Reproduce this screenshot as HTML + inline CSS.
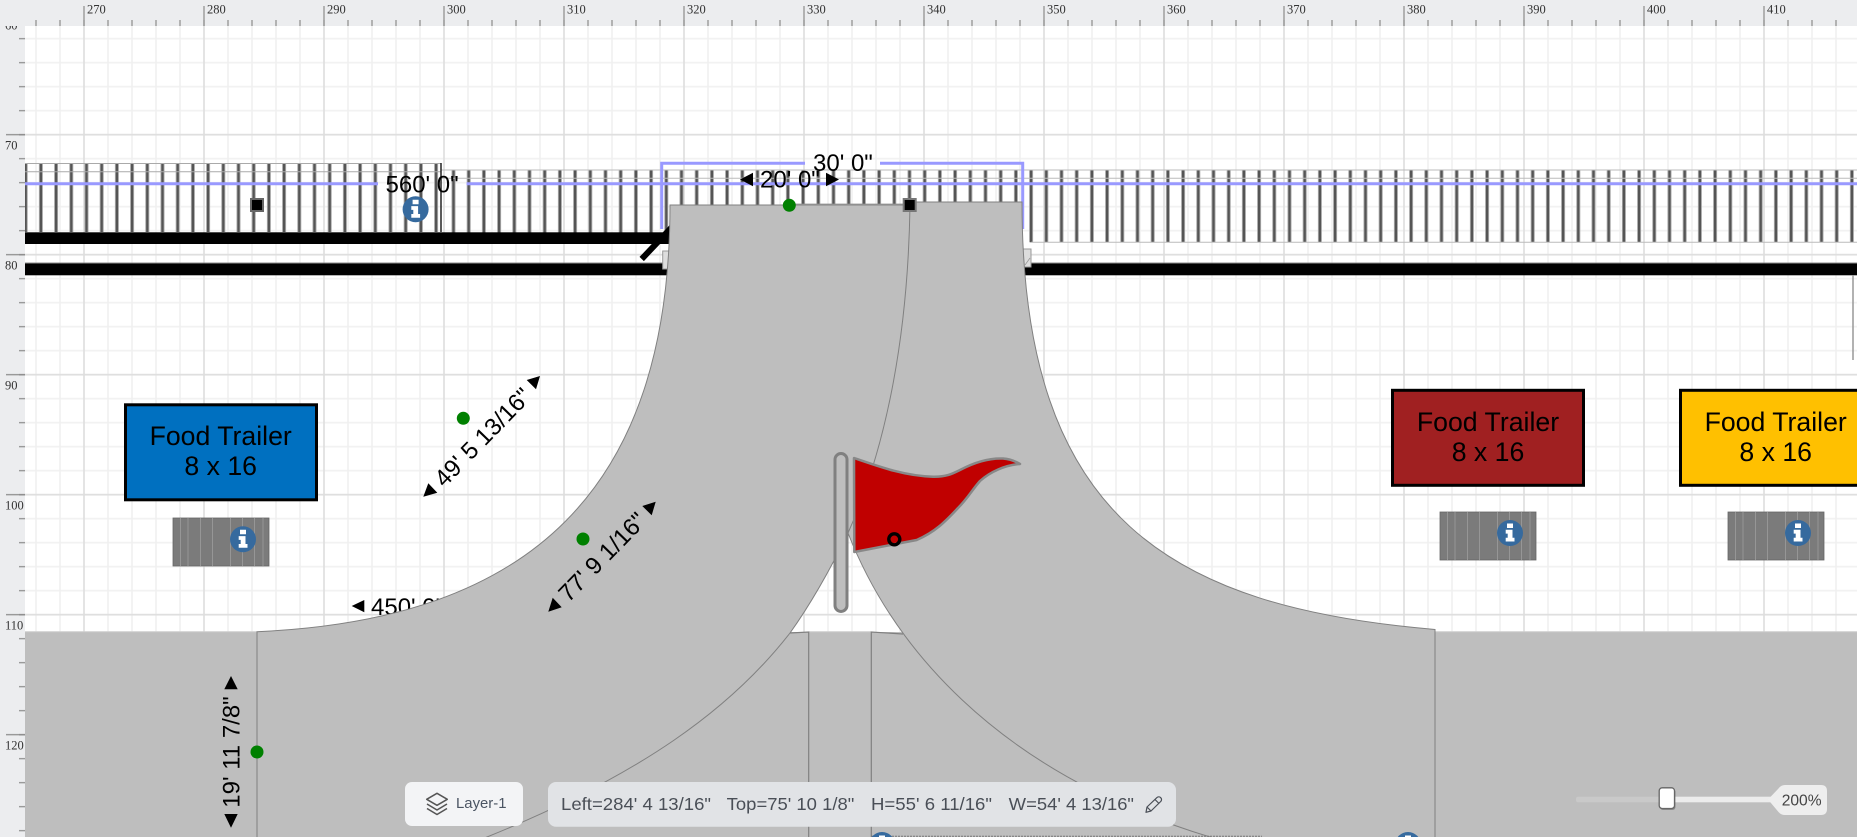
<!DOCTYPE html>
<html><head><meta charset="utf-8"><title>Site plan</title>
<style>
html,body{margin:0;padding:0;width:1857px;height:837px;overflow:hidden;background:#fff}
svg{display:block;font-family:"Liberation Sans",sans-serif}
.d{font-size:24px;fill:#000}
.f{font-size:26.67px;fill:#000;text-anchor:middle}
.r{font-family:"Liberation Serif",serif;font-size:12.5px;fill:#333}
.b{font-size:17.5px;fill:#4a4f57}
</style></head><body>
<svg width="1857" height="837" viewBox="0 0 1857 837" xmlns="http://www.w3.org/2000/svg">
<defs>
<pattern id="gm" patternUnits="userSpaceOnUse" x="0" y="2.7" width="24" height="24"><path d="M12 0V24M0 12H24" stroke="#f0f0f0" stroke-width="1.6" fill="none"/></pattern>
<pattern id="gM" patternUnits="userSpaceOnUse" x="24" y="-45.3" width="120" height="120"><path d="M60 0V120M0 60H120" stroke="#dddddd" stroke-width="1.5" fill="none"/></pattern>
<pattern id="tM" patternUnits="userSpaceOnUse" x="24" y="0" width="120" height="30"><path d="M60 6V26" stroke="#8a8a8a" stroke-width="1.2"/></pattern>
<pattern id="tm" patternUnits="userSpaceOnUse" x="0" y="0" width="24" height="30"><path d="M12 20V26" stroke="#8a8a8a" stroke-width="1.2"/></pattern>
<pattern id="lM" patternUnits="userSpaceOnUse" x="0" y="-45.3" width="30" height="120"><path d="M6 60H25" stroke="#8a8a8a" stroke-width="1.2"/></pattern>
<pattern id="lm" patternUnits="userSpaceOnUse" x="0" y="2.7" width="30" height="24"><path d="M19 12H25" stroke="#8a8a8a" stroke-width="1.2"/></pattern>
<g id="info"><circle r="13" fill="#366a9e"/><path d="M-3-9.5h6v4.5h-6zM-4.3-3.2h6.8v7.9h2v3.8h-8.8v-3.8h2v-4.1h-2z" fill="#fff"/></g>
<g id="deck"><rect width="96" height="48" fill="#7b7b7b" stroke="#666" stroke-width=".8"/><path d="M7.5 0V48M15 0V48M27.5 0V48M39.5 0V48M57.5 0V48M69.5 0V48M81.5 0V48M90 0V48" stroke="#999" stroke-width=".9"/></g>
</defs>

<rect x="25" y="26" width="1832" height="811" fill="#fff"/>
<rect x="25" y="26" width="1832" height="811" fill="url(#gm)"/>
<rect x="25" y="26" width="1832" height="811" fill="url(#gM)"/>

<!-- fence -->
<path d="M23.7 197.75H441" stroke="#a8a8a8" stroke-width="68.5" stroke-dasharray="4 11.2" fill="none"/>
<path d="M24.6 197.75H441" stroke="#555" stroke-width="68.5" stroke-dasharray="2.2 13" fill="none"/>
<path d="M25 163.5H441M25 171.7H441" stroke="#aaa" stroke-width="1"/>
<path d="M451.5 206.15H1857" stroke="#a8a8a8" stroke-width="72.3" stroke-dasharray="4 11.2" fill="none"/>
<path d="M452.4 206.15H1857" stroke="#555" stroke-width="72.3" stroke-dasharray="2.2 13" fill="none"/>
<path d="M441 170H1857M441 178.3H1857M1031 242.3H1857" stroke="#bbb" stroke-width="1"/>
<path d="M441 163V232" stroke="#222" stroke-width="1.5"/>
<path d="M25 183.7H378M466.6 183.7H1857" stroke="#9999ff" stroke-width="3"/>
<rect x="25" y="232.3" width="645" height="11.7" fill="#000"/>
<rect x="25" y="263.3" width="1832" height="12" fill="#000"/>
<path d="M25 262.9H1857" stroke="#888" stroke-width=".8"/>
<path d="M641.7 259L673 226" stroke="#000" stroke-width="6"/>
<rect x="662.7" y="251" width="9" height="18" fill="#ddd" stroke="#999"/>
<rect x="1022" y="249" width="9" height="18" fill="#ddd" stroke="#999"/>
<path d="M1025 265L1030 258" stroke="#999" stroke-width=".8"/>
<path d="M1853 275V360" stroke="#999" stroke-width="1.5"/>
<path d="M661.7 229V163.3H805M880 163.3H1022.7V229" fill="none" stroke="#9999ff" stroke-width="3"/>

<text class="d" x="371" y="615">450' 0"</text>
<path d="M351.7 606L364.3 600V612.3Z" fill="#000"/>

<!-- roads -->
<path d="M25 632H1857V845H25Z" fill="#bebebe"/>
<path d="M25 631.8H257M1435 631.8H1857M809 631.8H871" stroke="#ccc" stroke-width="1"/>
<path d="M909 202H1022C1022 520 1172 607 1435 629.5V845H1225L1210 837C990 770 890 640 848 533Z" fill="#bebebe" stroke="#808080" stroke-width="1"/>
<path d="M670 205H910C908 340 885 450 848 533C830 570 810 605 790 633C730 710 640 775 487 837L467 845H257V631.7C530 620 670 490 670 205Z" fill="#bebebe" stroke="#808080" stroke-width="1"/>
<path d="M790 633L808.7 632V837M871.3 837V632L903 634" fill="none" stroke="#808080" stroke-width="1.2"/>
<path d="M871 836.3H1262" stroke="#777" stroke-width="1" stroke-dasharray="2 1"/>
<path d="M789 204.6H905" stroke="#909090" stroke-width="2"/>

<!-- handles -->
<rect x="251" y="199" width="12" height="12" fill="#000" stroke="#666" stroke-width="2"/>
<rect x="903.7" y="199" width="12" height="12" fill="#000" stroke="#777" stroke-width="2"/>

<!-- dimension text -->
<text class="d" x="385.5" y="192.5">560' 0"</text>
<text class="d" x="813" y="171">30' 0"</text>
<text class="d" x="760" y="187.3">20' 0"</text>
<path d="M740 179.5L753 172.8V186.2ZM839 179.5L826 172.8V186.2Z" fill="#000"/>

<text class="d" text-anchor="middle" transform="translate(482.5 437) rotate(-45.7)" y="8.5">49' 5 13/16"</text>
<path d="M423.3 496.7L437.3 492.7L428.3 483.3ZM540 376L526.7 380L536 389.3Z" fill="#000"/>
<text class="d" text-anchor="middle" transform="translate(602 556.7) rotate(-45.7)" y="8.5">77' 9 1/16"</text>
<path d="M548.3 611.7L561.7 607.3L552.7 597.7ZM655.7 501.7L642.3 506L651.7 515.3Z" fill="#000"/>
<text class="d" text-anchor="middle" transform="translate(239.3 752) rotate(-90)">19' 11 7/8"</text>
<path d="M231 676L237.7 689.3H224.3ZM231 827.7L237.7 814H224.3Z" fill="#000"/>

<circle cx="789.3" cy="205.3" r="6.5" fill="#008000"/>
<circle cx="463.3" cy="418.3" r="6.5" fill="#008000"/>
<circle cx="583" cy="539" r="6.5" fill="#008000"/>
<circle cx="257" cy="752" r="6.5" fill="#008000"/>

<use href="#info" transform="translate(415.6 209.3)"/>
<use href="#info" transform="translate(882 845)"/>
<use href="#info" transform="translate(1408 845)"/>

<!-- trailers -->
<rect x="125.5" y="404.8" width="191" height="95" fill="#0070c0" stroke="#000" stroke-width="3"/>
<text class="f" x="220.7" y="445">Food Trailer</text><text class="f" x="220.7" y="475">8 x 16</text>
<rect x="1392.5" y="390.3" width="191" height="95" fill="#a02021" stroke="#000" stroke-width="3"/>
<text class="f" x="1488" y="431">Food Trailer</text><text class="f" x="1488" y="461">8 x 16</text>
<rect x="1680.5" y="390.3" width="191" height="95" fill="#ffc000" stroke="#000" stroke-width="3"/>
<text class="f" x="1775.7" y="431">Food Trailer</text><text class="f" x="1775.7" y="461">8 x 16</text>

<use href="#deck" transform="translate(173 518)"/><use href="#info" transform="translate(243 539.3)"/>
<use href="#deck" transform="translate(1440 512)"/><use href="#info" transform="translate(1510 533)"/>
<use href="#deck" transform="translate(1728 512)"/><use href="#info" transform="translate(1798 533)"/>

<!-- flag -->
<rect x="835" y="453.5" width="12" height="158" rx="6" fill="#bebebe" stroke="#808080" stroke-width="3"/>
<path d="M854 458C880 467 905 476 933 476.7C946 477 952 474 960 470C975 462 990 458 1003 458.5C1010 459 1015 461 1020 464C1005 465 990 472 980 481C972 490 968 498 958 508C945 522 935 532 916.7 540L854.3 552Z" fill="#c00000" stroke="#888" stroke-width="2.5" stroke-linejoin="round"/>
<circle cx="894.3" cy="539.3" r="5.5" fill="none" stroke="#000" stroke-width="3.4"/>

<!-- rulers -->
<rect x="0" y="0" width="25" height="837" fill="#ecedef"/>
<rect x="0" y="26" width="25" height="811" fill="url(#lm)"/>
<rect x="0" y="26" width="25" height="811" fill="url(#lM)"/>
<text class="r" x="5" y="29.5">60</text><text class="r" x="5" y="149.5">70</text><text class="r" x="5" y="269.5">80</text><text class="r" x="5" y="389.5">90</text><text class="r" x="5" y="509.5">100</text><text class="r" x="5" y="629.5">110</text><text class="r" x="5" y="749.5">120</text>
<rect x="0" y="0" width="1857" height="26" fill="#ecedef"/>
<rect x="25" y="0" width="1832" height="26" fill="url(#tm)"/>
<rect x="25" y="0" width="1832" height="26" fill="url(#tM)"/>
<text class="r" x="87" y="13.5">270</text><text class="r" x="207" y="13.5">280</text><text class="r" x="327" y="13.5">290</text><text class="r" x="447" y="13.5">300</text><text class="r" x="567" y="13.5">310</text><text class="r" x="687" y="13.5">320</text><text class="r" x="807" y="13.5">330</text><text class="r" x="927" y="13.5">340</text><text class="r" x="1047" y="13.5">350</text><text class="r" x="1167" y="13.5">360</text><text class="r" x="1287" y="13.5">370</text><text class="r" x="1407" y="13.5">380</text><text class="r" x="1527" y="13.5">390</text><text class="r" x="1647" y="13.5">400</text><text class="r" x="1767" y="13.5">410</text>

<!-- layer pill -->
<rect x="405" y="782" width="118" height="44" rx="7" fill="#f3f4f6"/>
<path d="M437 793.3L447.3 799.3L437 805.3L426.7 799.3Z" fill="none" stroke="#555" stroke-width="1.5" stroke-linejoin="round"/>
<path d="M427 804L437 810L447 804M427 808.5L437 814.5L447 808.5" fill="none" stroke="#555" stroke-width="1.6" stroke-linejoin="round"/>
<text x="456" y="808" font-size="14.5" fill="#4b5563" textLength="50.5" lengthAdjust="spacingAndGlyphs">Layer-1</text>

<!-- info bar -->
<rect x="548" y="782" width="628" height="44.7" rx="8" fill="#e1e3e6"/>
<text class="b" x="561" y="810" textLength="150" lengthAdjust="spacingAndGlyphs">Left=284' 4 13/16"</text>
<text class="b" x="726.7" y="810" textLength="127.6" lengthAdjust="spacingAndGlyphs">Top=75' 10 1/8"</text>
<text class="b" x="871" y="810" textLength="121" lengthAdjust="spacingAndGlyphs">H=55' 6 11/16"</text>
<text class="b" x="1008.7" y="810" textLength="125.3" lengthAdjust="spacingAndGlyphs">W=54' 4 13/16"</text>
<path d="M1146 812.3L1147 807L1156.8 797.7C1158 796.6 1159.6 796.6 1160.7 797.7C1161.8 798.8 1161.8 800.4 1160.7 801.5L1151 811ZM1147 807L1151 811M1155 799.5L1159 803.5" fill="none" stroke="#4a4f57" stroke-width="1.2" stroke-linejoin="round"/>

<!-- zoom slider -->
<rect x="1576" y="796.7" width="90" height="5.6" rx="2" fill="#c9c9c9"/>
<rect x="1666" y="796.7" width="106" height="5.6" fill="#ececec"/>
<rect x="1660" y="789" width="15.5" height="21" rx="3" fill="#555" opacity=".5"/>
<rect x="1659.2" y="787.8" width="15.3" height="20.7" rx="3" fill="#fff" stroke="#666" stroke-width="1.3"/>
<path d="M1768 799.5L1778.5 788.5Q1781 785 1785 785H1821Q1827 785 1827 791V809Q1827 815 1821 815H1785Q1781 815 1778.5 812Z" fill="#eee"/>
<text x="1781.7" y="805.5" font-size="15.6" fill="#444">200%</text>
</svg>
</body></html>
